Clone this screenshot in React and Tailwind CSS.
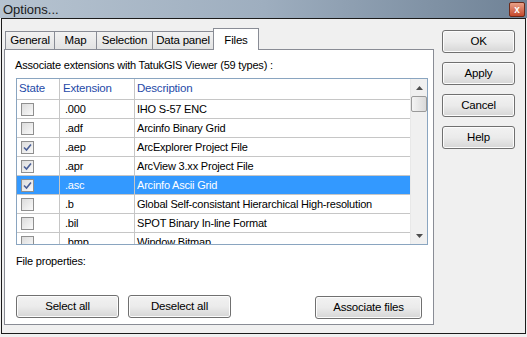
import React from 'react';

const rows = [
  { ext: '.000', desc: 'IHO S-57 ENC', checked: false },
  { ext: '.adf', desc: 'Arcinfo Binary Grid', checked: false },
  { ext: '.aep', desc: 'ArcExplorer Project File', checked: true },
  { ext: '.apr', desc: 'ArcView 3.xx Project File', checked: true },
  { ext: '.asc', desc: 'Arcinfo Ascii Grid', checked: true, selected: true },
  { ext: '.b', desc: 'Global Self-consistant Hierarchical High-resolution', checked: false },
  { ext: '.bil', desc: 'SPOT Binary In-line Format', checked: false },
  { ext: '.bmp', desc: 'Window Bitmap', checked: false },
];

const tabs = ['General', 'Map', 'Selection', 'Data panel'];
const tabWidths = ['w-[50px]', 'w-[43px]', 'w-[57px]', 'w-[62px]'];

const Check = ({ checked }) => (
  <div className="w-[13px] h-[13px] border border-[#8f8f8f] bg-gradient-to-br from-[#dcdcdc] to-[#fafafa] flex items-center justify-center">
    {checked && (
      <svg width="9" height="9" viewBox="0 0 9 9">
        <path d="M1 4.5 L3.5 7 L8 1.5" fill="none" stroke="#4a5f97" strokeWidth="1.6" />
      </svg>
    )}
  </div>
);

const Btn = ({ label, className = '' }) => (
  <button className={`h-[23px] border border-[#707070] rounded-[3px] bg-gradient-to-b from-[#f2f2f2] via-[#ebebeb] to-[#d6d6d6] text-[11.5px] tracking-[-0.2px] text-black shadow-[inset_0_0_0_1px_#fcfcfc] ${className}`}>
    {label}
  </button>
);

export default function App() {
  return (
    <div className="w-[527px] h-[337px] bg-[#f0f0f0] overflow-hidden relative text-black text-[11px] tracking-[-0.2px]" style={{ fontFamily: '"Liberation Sans", Arial, sans-serif' }}>
      {/* title bar */}
      <div className="h-[18px] flex items-center justify-between bg-gradient-to-r from-[#b6c3d0] via-[#9eaebf] to-[#6f8296]">
        <span className="pl-[3px] text-[13px] tracking-normal text-[#1a1a1a] leading-none">Options...</span>
        <div className="mr-[2px] mt-[1px] w-[16px] h-[15px] rounded-[2px] border border-[#6b2a1a] bg-gradient-to-b from-[#e8a088] to-[#c4472a] flex items-center justify-center">
          <span className="text-white text-[10px] font-bold leading-none">x</span>
        </div>
      </div>

      {/* window body */}
      <div className="mx-[1px] h-[316px] border border-[#1b1b1b] bg-[#f0f0f0] flex pl-[2px] pt-[9px]">
        <div className="w-[430px] flex flex-col">
          {/* tabs */}
          <div className="flex items-end h-[21px] pl-[1px] relative z-10">
            {tabs.map((t, i) => (
              <div key={t} className={`${tabWidths[i]} h-[18px] mr-[-1px] border border-[#898c95] border-b-0 bg-gradient-to-b from-[#f2f2f2] to-[#e3e3e3] text-[11.5px] flex items-center justify-center`}>
                {t}
              </div>
            ))}
            <div className="w-[46px] h-[22px] mb-[-1px] border border-[#898c95] border-b-0 bg-white text-[11.5px] flex items-start justify-center pt-[3px]">
              Files
            </div>
          </div>
          {/* tab page */}
          <div className="h-[276px] border border-[#898c95] bg-white flex flex-col px-[11px] pt-[8px]">
            <div className="leading-[14px] ml-[-1px]">Associate extensions with TatukGIS Viewer (59 types) :</div>
            <div className="mt-[6px] w-[412px] h-[167px] border border-[#8aa5c0] flex overflow-hidden">
              <div className="w-[393px] flex flex-col">
                <div className="h-[21px] flex border-b border-[#c6c6c6] text-[11.5px] text-[#1f4aa8] shrink-0">
                  <div className="w-[43px] border-r border-[#c6c6c6] pl-[2px] flex items-center">State</div>
                  <div className="w-[75px] border-r border-[#c6c6c6] pl-[3px] flex items-center">Extension</div>
                  <div className="flex-1 pl-[2px] flex items-center">Description</div>
                </div>
                {rows.map((r) => (
                  <div key={r.ext} className={`h-[19px] shrink-0 flex border-b border-[#c6c6c6] ${r.selected ? 'bg-[#3399ff] text-white' : ''}`}>
                    <div className="w-[43px] border-r border-[#c6c6c6] pl-[4px] flex items-center">
                      <Check checked={r.checked} />
                    </div>
                    <div className="w-[75px] border-r border-[#c6c6c6] pl-[5px] flex items-center">{r.ext}</div>
                    <div className="flex-1 pl-[2px] flex items-center whitespace-nowrap">{r.desc}</div>
                  </div>
                ))}
              </div>
              {/* scrollbar */}
              <div className="w-[17px] bg-[#f0f0f0] border-l border-[#e8e8e8] flex flex-col items-center">
                <div className="h-[17px] flex items-center justify-center">
                  <svg width="7" height="4" viewBox="0 0 7 4"><path d="M0 4 L3.5 0 L7 4Z" fill="#4d4d4d" /></svg>
                </div>
                <div className="w-[16px] h-[16px] border border-[#9a9a9a] rounded-[2px] bg-gradient-to-r from-[#f4f4f4] to-[#dadada]" />
                <div className="flex-1" />
                <div className="h-[17px] flex items-center justify-center">
                  <svg width="7" height="4" viewBox="0 0 7 4"><path d="M0 0 L3.5 4 L7 0Z" fill="#4d4d4d" /></svg>
                </div>
              </div>
            </div>
            <div className="mt-[9px] leading-[14px]">File properties:</div>
            <div className="mt-[27px] flex">
              <Btn label="Select all" className="w-[103px]" />
              <Btn label="Deselect all" className="w-[103px] ml-[9px]" />
              <div className="flex-1" />
              <Btn label="Associate files" className="w-[107px] mt-[1px]" />
            </div>
          </div>
        </div>

        {/* right buttons */}
        <div className="ml-[8px] mt-[2px] flex flex-col gap-[9px]">
          <Btn label="OK" className="w-[73px]" />
          <Btn label="Apply" className="w-[73px]" />
          <Btn label="Cancel" className="w-[73px]" />
          <Btn label="Help" className="w-[73px]" />
        </div>
      </div>
    </div>
  );
}
